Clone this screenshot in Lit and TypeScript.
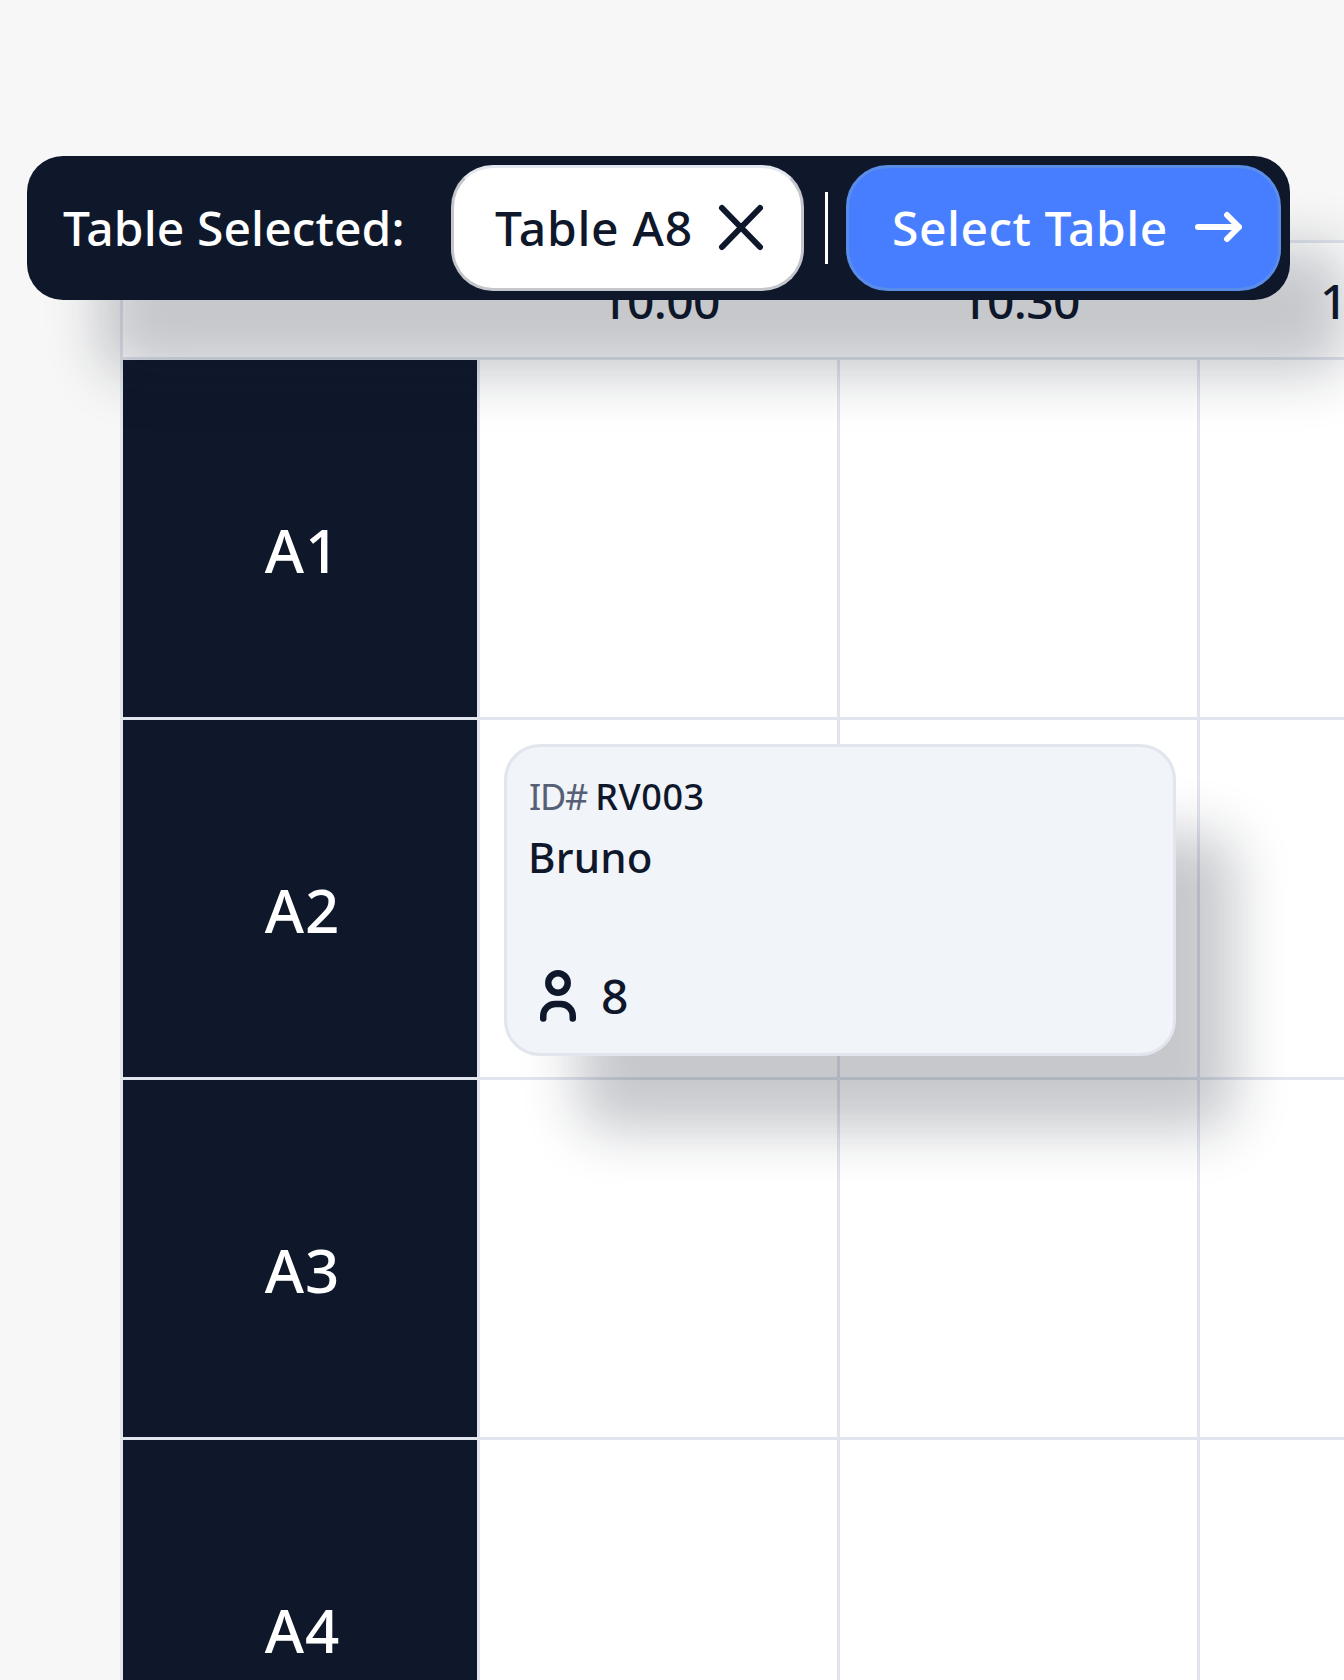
import { LitElement, html, css } from 'lit';
import { customElement } from 'lit/decorators.js';

const TIMES = ['10.00', '10.30', '11.00'];
const ROWS = ['A1', 'A2', 'A3', 'A4'];

@customElement('app-root')
export class AppRoot extends LitElement {
    static styles = css`
        :host {
            display: block;
            position: relative;
            height: 1680px;
            overflow: hidden;
            background: #f7f7f7;
            font-family: 'Noto Sans', sans-serif;
            color: #0f182b;
        }

        .toolbar {
            position: absolute;
            left: 27px;
            top: 156px;
            width: 1263px;
            height: 144px;
            box-sizing: border-box;
            padding: 9px;
            display: flex;
            align-items: stretch;
            background: #0f182b;
            border-radius: 36px;
            box-shadow: 66px 82px 56px -8px rgba(15, 24, 43, 0.24);
            font-size: 48px;
            font-weight: 500;
            z-index: 2;
        }

        .label {
            color: #fff;
            padding: 0 0 2px 27px;
            width: 388px;
            display: flex;
            align-items: center;
            white-space: nowrap;
            letter-spacing: 0.1px;
        }

        .chip {
            width: 353px;
            box-sizing: border-box;
            padding: 0 0 2px 41px;
            display: flex;
            align-items: center;
            gap: 24px;
            background: #fff;
            border: 3px solid #c4c6cc;
            border-top-color: #e4e7ef;
            border-radius: 42px;
            white-space: nowrap;
            letter-spacing: 0.7px;
        }

        .divider {
            align-self: center;
            width: 3px;
            height: 72px;
            margin: 0 18px 0 21px;
            background: #fff;
        }

        .select {
            width: 435px;
            box-sizing: border-box;
            padding: 0 0 2px 43px;
            display: flex;
            align-items: center;
            gap: 27px;
            color: #fff;
            background: #477eff;
            border: 3px solid #5a8de8;
            border-radius: 42px;
            white-space: nowrap;
            letter-spacing: 0.5px;
        }

        .schedule {
            margin-left: 120px;
            padding-top: 240px;
            width: 1440px;
        }

        .head {
            display: flex;
            height: 120px;
            box-sizing: border-box;
            background: #fff;
            border: 3px solid #e2e5ee;
            border-right: none;
        }

        .corner {
            width: 357px;
        }

        .time {
            width: 360px;
            display: flex;
            align-items: center;
            justify-content: center;
            font-size: 48px;
            font-weight: 500;
            letter-spacing: -0.6px;
        }

        .row {
            display: flex;
            height: 360px;
            box-sizing: border-box;
            border-left: 3px solid #e2e5ee;
        }

        .name {
            width: 357px;
            box-sizing: border-box;
            padding: 22px 0 0 5px;
            display: flex;
            align-items: center;
            justify-content: center;
            color: #fff;
            background: #0f182b;
            font-size: 60px;
            font-weight: 500;
            letter-spacing: 1px;
            border-right: 3px solid #e2e5ee;
            border-bottom: 3px solid #e2e5ee;
        }

        .cell {
            position: relative;
            width: 360px;
            box-sizing: border-box;
            background: #fff;
            border-right: 3px solid #e2e5ee;
            border-bottom: 3px solid #e2e5ee;
        }

        .card {
            position: absolute;
            left: 24px;
            top: 24px;
            width: 672px;
            height: 312px;
            box-sizing: border-box;
            padding: 26px 21px 21px;
            display: flex;
            flex-direction: column;
            background: #f1f4f9;
            border: 3px solid #e2e5ee;
            border-radius: 36px;
            box-shadow: 66px 82px 56px -8px rgba(15, 24, 43, 0.24);
            z-index: 1;
        }

        .id {
            font-size: 36px;
            line-height: 48px;
            font-weight: 500;
            letter-spacing: 0.6px;
            padding-left: 1px;
        }

        .id span {
            font-weight: 400;
            letter-spacing: -1.2px;
            color: #566074;
            margin-right: 8px;
        }

        .guest {
            font-size: 42px;
            line-height: 60px;
            font-weight: 500;
            letter-spacing: 0.2px;
            margin-top: 6px;
        }

        .seats {
            margin-top: auto;
            display: flex;
            align-items: center;
            gap: 25px;
            padding-left: 12px;
            font-size: 48px;
            font-weight: 500;
            line-height: 72px;
        }

        svg {
            display: block;
            flex: none;
        }
    `;

    render() {
        return html`
            <div class="toolbar">
                <div class="label">Table Selected:</div>
                <div class="chip">
                    Table A8
                    <svg width="48" height="48" viewBox="0 0 48 48" fill="none" stroke="#0f182b" stroke-width="6" stroke-linecap="round">
                        <path d="M5 5l38 39M43 5L5 44" />
                    </svg>
                </div>
                <div class="divider"></div>
                <div class="select">
                    Select Table
                    <svg width="47" height="36" viewBox="0 0 47 36" fill="none" stroke="#fff" stroke-width="6" stroke-linecap="round" stroke-linejoin="round">
                        <path d="M3 18h41M32 6l12 12-12 12" />
                    </svg>
                </div>
            </div>
            <div class="schedule">
                <div class="head">
                    <div class="corner"></div>
                    ${TIMES.map((t) => html`<div class="time">${t}</div>`)}
                </div>
                ${ROWS.map((r) => html`
                    <div class="row">
                        <div class="name">${r}</div>
                        ${TIMES.map((t, i) => html`
                            <div class="cell">
                                ${r === 'A2' && i === 0 ? this.renderCard() : ''}
                            </div>
                        `)}
                    </div>
                `)}
            </div>
        `;
    }

    renderCard() {
        return html`
            <div class="card">
                <div class="id"><span>ID#</span>RV003</div>
                <div class="guest">Bruno</div>
                <div class="seats">
                    <svg width="36" height="52" viewBox="0 0 36 52" fill="none" stroke="#0f182b" stroke-width="6.5" stroke-linecap="round">
                        <circle cx="18" cy="13" r="9.7" />
                        <path d="M3.25 48.5v-2.5a12 12 0 0 1 12-12h5.5a12 12 0 0 1 12 12v2.5" />
                    </svg>
                    8
                </div>
            </div>
        `;
    }
}
